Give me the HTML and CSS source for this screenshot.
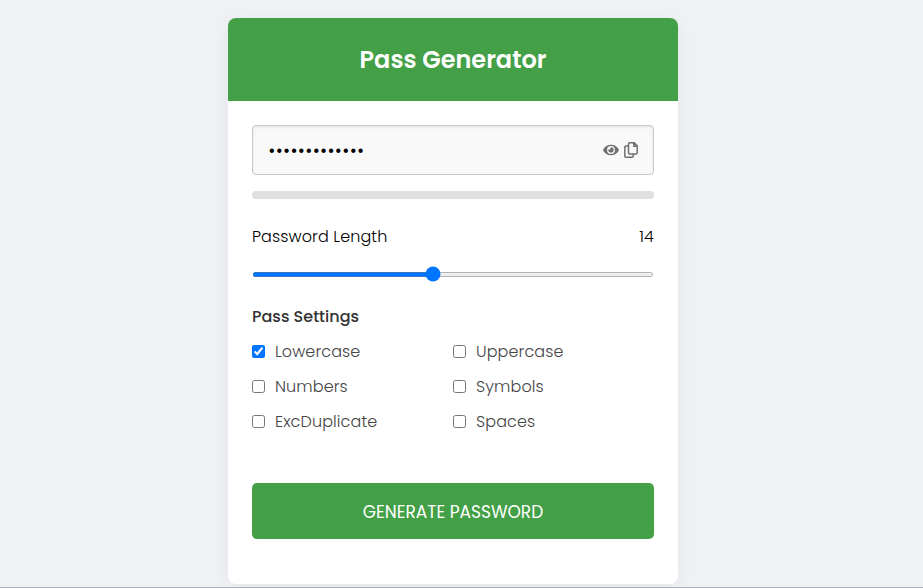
FILE: index.html
```html
<!DOCTYPE html>
<html lang="en">
<head>
<meta charset="utf-8">
<title>Pass Generator</title>
<link rel="stylesheet" href="styles.css">
</head>
<body>
<main class="card">
  <h1 class="title">Pass Generator</h1>
  <div class="content">
    <div class="field">
      <input class="password" type="password" value="abcdefghijklm" readonly aria-label="Password">
      <svg class="eye" viewBox="0 0 576 512"><path d="M572.52 241.4C518.29 135.59 410.93 64 288 64S57.68 135.64 3.48 241.41a32.35 32.35 0 0 0 0 29.19C57.71 376.41 165.07 448 288 448s230.32-71.64 284.52-177.41a32.35 32.35 0 0 0 0-29.19zM288 400a144 144 0 1 1 144-144 143.93 143.93 0 0 1-144 144zm0-240a95.31 95.31 0 0 0-25.31 3.79 47.85 47.85 0 0 1-66.9 66.9A95.78 95.78 0 1 0 288 160z"/></svg>
      <svg class="copy" viewBox="0 0 14 16"><path d="M4.500 4H2Q.8 4 .8 5.200V14Q.8 15.200 2 15.200H8Q9.200 15.200 9.200 14V12M5.700.8H10.300L13.200 3.700V10.800Q13.200 12 12 12H5.700Q4.500 12 4.500 10.800V2Q4.500.8 5.700.8ZM9.800 1V4.200H13"/></svg>
    </div>
    <div class="strength"></div>
    <div class="length-row"><span>Password Length</span><span>14</span></div>
    <input class="range" type="range" min="1" max="30" value="14" aria-label="Password Length">
    <h2 class="subtitle">Pass Settings</h2>
    <div class="options">
      <label class="option"><input type="checkbox" checked><span>Lowercase</span></label>
      <label class="option"><input type="checkbox"><span>Uppercase</span></label>
      <label class="option"><input type="checkbox"><span>Numbers</span></label>
      <label class="option"><input type="checkbox"><span>Symbols</span></label>
      <label class="option"><input type="checkbox"><span>ExcDuplicate</span></label>
      <label class="option"><input type="checkbox"><span>Spaces</span></label>
    </div>
    <button class="generate">GENERATE PASSWORD</button>
  </div>
</main>
</body>
</html>
```
FILE: styles.css
```css
* { box-sizing: border-box; margin: 0; padding: 0; }
body {
  height: 588px;
  padding-top: 18px;
  overflow: hidden;
  background: #f0f1f5;
  border-bottom: 1px solid #abb0c0;
  font-family: Poppins, Inter, sans-serif;
  font-size: 16px;
}
.card {
  width: 450px;
  height: 566px;
  margin-left: 228px;
  overflow: hidden;
  border-radius: 8px;
  background: #fff;
  box-shadow: 0 4px 20px rgba(0, 0, 0, .05);
}
.title {
  height: 83px;
  background: #43a047;
  color: #fff;
  font-size: 24px;
  font-weight: 600;
  line-height: 83px;
  text-align: center;
}
.content { padding: 24px; }
.field { display: flex; align-items: center; height: 50px; padding: 0 15px 0 16px; border: 1px solid #c8c8c8; border-radius: 4px; background: #f9f9f9; box-shadow: inset 0 1px 3px rgba(0, 0, 0, .1); }
.password { flex: 1; min-width: 0; padding-top: 2px; border: 0; outline: 0; background: transparent; color: #000; font: 16px "Liberation Sans", sans-serif; letter-spacing: 1.8px; }
.eye { width: 16px; height: 14px; margin-right: 5px; fill: #707070; }
.copy { width: 14px; height: 16px; fill: none; stroke: #707070; stroke-width: 1.5; }
.strength { height: 8px; margin-top: 16px; border-radius: 4px; background: #dfdfdf; }
.length-row { display: flex; justify-content: space-between; margin-top: 26px; line-height: 24px; color: #000; font-weight: 300; letter-spacing: .1px; }
.range { display: block; width: 402px; height: 5px; margin-top: 22.6px; accent-color: #0075ff; }
.subtitle { margin-top: 28.4px; color: #333; font-size: 16px; font-weight: 500; line-height: 24px; }
.options { display: grid; grid-template-columns: 201px 201px; grid-auto-rows: 24px; row-gap: 11px; margin-top: 10.3px; }
.option { display: flex; align-items: center; color: #444; font-weight: 300; letter-spacing: .1px; }
.option input { width: 13px; height: 13px; margin-right: 10px; accent-color: #0075ff; }
.generate { display: block; width: 402px; height: 56px; padding-top: 2px; margin-top: 49.7px; border: 0; border-radius: 5px; background: #43a047; color: #fff; font: 400 17px Poppins, Inter, sans-serif; }
```
